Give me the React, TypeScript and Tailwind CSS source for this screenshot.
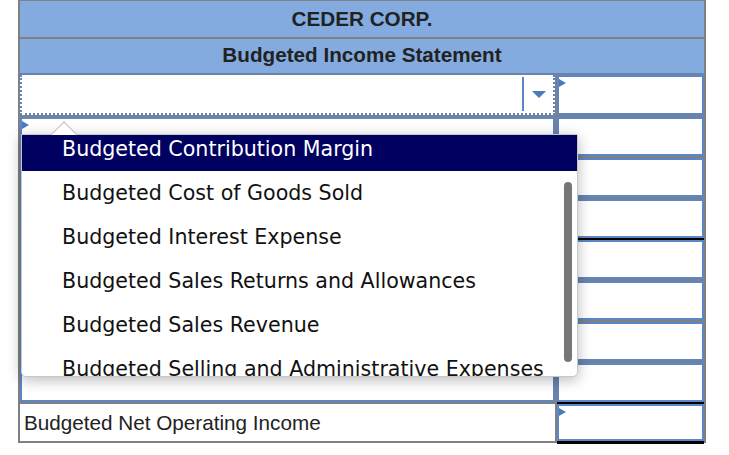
import React from 'react';

const BLUE = 'border-[#5b86c8]';

const options = [
  'Budgeted Contribution Margin',
  'Budgeted Cost of Goods Sold',
  'Budgeted Interest Expense',
  'Budgeted Sales Returns and Allowances',
  'Budgeted Sales Revenue',
  'Budgeted Selling and Administrative Expenses',
];

function Marker() {
  return (
    <span className="absolute left-0 top-[2px] w-0 h-0 border-y-[4px] border-y-transparent border-l-[7px] border-l-[#4a7abf]" />
  );
}

function InputCell({ marker, total }: { marker?: boolean; total?: boolean }) {
  return (
    <div className={`relative flex-1 bg-white border-2 ${BLUE} ${total ? 'shadow-[0_3px_0_0_#000]' : ''}`}>
      {marker && <Marker />}
    </div>
  );
}

export default function App() {
  const rows = [
    { lm: true, rm: true },
    { lm: false, rm: false },
    { lm: false, rm: false, total: true },
    { lm: false, rm: false },
    { lm: false, rm: false },
    { lm: false, rm: false },
    { lm: false, rm: false, total: true },
  ];

  return (
    <div className="relative w-[729px] h-[455px] bg-white overflow-hidden" style={{ fontFamily: '"Liberation Sans", Arial, sans-serif' }}>
      <div className="ml-[18px] w-[688px] border-x-2 border-b-2 border-t border-[#808080] bg-[#808080]">
        <div className="h-[36px] bg-[#83abe0] flex items-center justify-center font-bold text-[20.7px] text-[#222]">
          CEDER CORP.
        </div>
        <div className="mt-[2px] h-[34px] bg-[#83abe0] flex items-center justify-center pb-[2px] font-bold text-[20.7px] text-[#222]">
          Budgeted Income Statement
        </div>

        <div className="flex flex-col gap-[2px] border-t-2 border-dotted border-[#5b86c8]">
          {/* focused select row */}
          <div className="h-[40px] flex gap-[2px]">
            <div className="w-[535px] bg-white border-2 border-t-0 border-dotted border-[#5b86c8] flex justify-end">
              <div className="w-[31px] border-l-2 border-[#5b86c8] my-[2px] flex items-center justify-center">
                <span className="w-0 h-0 border-x-[7px] border-x-transparent border-t-[7px] border-t-[#4a7abf]" />
              </div>
            </div>
            <InputCell marker />
          </div>

          {rows.map((r, i) => (
            <div key={i} className="h-[39px] flex gap-[2px]">
              <div className={`relative w-[535px] bg-white border-2 ${BLUE}`}>{i === 0 && <Marker />}</div>
              <InputCell total={r.total} />
            </div>
          ))}

          <div className="h-[37px] flex gap-[2px]">
            <div className="w-[535px] bg-white flex items-center pl-[4px] text-[20.7px] text-[#222]">
              Budgeted Net Operating Income
            </div>
            <InputCell marker total />
          </div>
        </div>
      </div>

      {/* open dropdown */}
      <div className="absolute left-[21px] top-[134px] w-[557px] h-[243px] bg-white border border-[#c8c8c8] rounded-b-[5px] shadow-[0_3px_14px_rgba(0,0,0,0.28)]">
        <span className="absolute left-[33px] top-[-10px] w-[18px] h-[18px] rotate-45 bg-white border-l border-t border-[#c0c0c0]" />
        <div className="relative h-full overflow-hidden rounded-b-[5px]" style={{ fontFamily: '"DejaVu Sans", Verdana, sans-serif' }}>
          <div className="-mt-[8px]">
            {options.map((o, i) => (
              <div
                key={o}
                className={`h-[44px] flex items-center pl-[40px] text-[20.6px] whitespace-nowrap ${
                  i === 0 ? 'bg-[#000060] text-white' : 'text-[#111]'
                }`}
              >
                {o}
              </div>
            ))}
          </div>
          <div className="absolute left-[542px] top-[47px] w-[8px] h-[180px] rounded-full bg-[#777]" />
        </div>
      </div>
    </div>
  );
}
